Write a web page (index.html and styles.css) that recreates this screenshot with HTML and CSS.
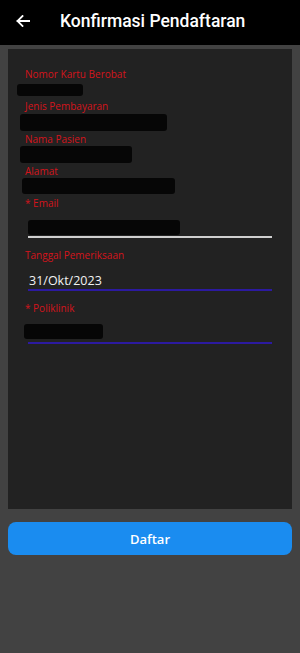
FILE: index.html
```html
<!DOCTYPE html>
<html lang="id">
<head>
<meta charset="utf-8">
<link rel="stylesheet" href="styles.css">
</head>
<body>
<header class="topbar">
  <svg class="back" width="14" height="12" viewBox="0 0 14 12"><path d="M13.5 6H1.5M6.5 1L1.5 6l5 5" fill="none" stroke="#fff" stroke-width="1.8" stroke-linecap="square"/></svg>
  <h1 class="title">Konfirmasi Pendaftaran</h1>
</header>
<main class="page">
  <section class="card">
    <div class="lbl l1">Nomor Kartu Berobat</div>
    <div class="blob b1"></div>
    <div class="lbl l2">Jenis Pembayaran</div>
    <div class="blob b2"></div>
    <div class="lbl l3">Nama Pasien</div>
    <div class="blob b3"></div>
    <div class="lbl l4">Alamat</div>
    <div class="blob b4"></div>
    <div class="lbl l5">* Email</div>
    <div class="input email"><div class="blob b5"></div></div>
    <div class="lbl l6">Tanggal Pemeriksaan</div>
    <div class="input date"><span class="val">31/Okt/2023</span></div>
    <div class="lbl l7">* Poliklinik</div>
    <div class="input poli"><div class="blob b6"></div></div>
  </section>
  <button class="btn">Daftar</button>
</main>
</body>
</html>
```
FILE: styles.css
```css
* { box-sizing: border-box; }
html, body { margin: 0; padding: 0; }
body { background: #424242; width: 300px; height: 653px; font-family: "Open Sans", sans-serif; }
.topbar { height: 45px; background: #000; display: flex; align-items: center; padding-left: 16px; }
.back { display: block; margin-top: -3px; }
.title { margin: 0 0 0 30px; color: #fff; font-family: Roboto, sans-serif; font-weight: 500; font-size: 17.5px; line-height: 20px; margin-top: -4px; }
.page { padding: 4px 8px 0; }
.card { background: #222222; height: 460px; padding: 18px 17px 0; }
.lbl { color: #d4141c; font-size: 10px; line-height: 14px; }
.blob { background: #060606; border-radius: 3px; }
.b1 { margin-top: 3px; height: 12px; width: 66px; margin-left: -8px; }
.l2 { margin-top: 3px; }
.b2 { margin-top: 1px; height: 17px; width: 147px; margin-left: -5px; }
.l3 { margin-top: 1px; }
.b3 { height: 17px; width: 112px; margin-left: -5px; }
.l4 { margin-top: 1px; }
.b4 { height: 16px; width: 153px; margin-left: -3px; }
.l5 { margin-top: 2px; }
.input { margin: 0 3px; }
.email { padding-top: 10px; padding-bottom: 1px; border-bottom: 2px solid #cfcfcf; }
.b5 { height: 15px; width: 152px; }
.l6 { margin-top: 10px; }
.date { padding-top: 11px; padding-bottom: 0; border-bottom: 2px solid #2c1aa0; }
.val { display: block; color: #f2f2f2; font-size: 12.5px; line-height: 16px; margin-left: 1px; }
.l7 { margin-top: 10px; }
.poli { padding-top: 9px; padding-bottom: 3px; border-bottom: 2px solid #2c1aa0; }
.b6 { height: 15px; width: 79px; margin-left: -4px; }
.btn { display: block; width: 100%; margin-top: 13px; height: 33px; border: 0; border-radius: 8px; background: #1a8cf0; color: #fff; font-family: "Open Sans", sans-serif; font-weight: 600; font-size: 13px; padding: 0; }
```
